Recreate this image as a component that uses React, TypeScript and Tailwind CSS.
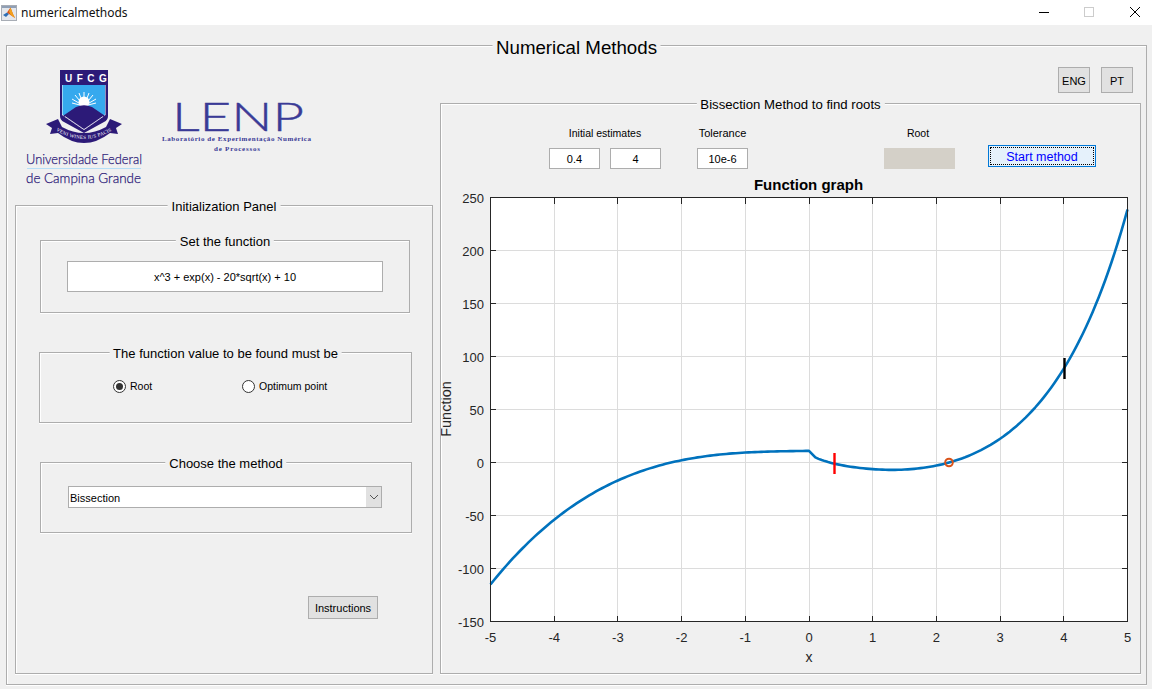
import React from "react";

const etched = "border border-[#adadad] shadow-[inset_1px_1px_0_#ffffff,0_1px_0_#ffffff]";

function Panel({ title, className, titleClass, children }: { title: string; className: string; titleClass?: string; children?: React.ReactNode }) {
  return (
    <div className={`relative ${etched} ${className}`}>
      <span className={`absolute left-1/2 -translate-x-1/2 whitespace-nowrap bg-[#f0f0f0] px-[4px] text-black ${titleClass ?? "top-[-7px] text-[13px] leading-[16px]"}`}>{title}</span>
      {children}
    </div>
  );
}

function GrayButton({ label, className }: { label: string; className: string }) {
  return (
    <div className={`flex items-center justify-center border border-[#adadad] bg-[#e1e1e1] pt-[2px] text-[11px] text-black ${className}`}>{label}</div>
  );
}

function Field({ value, className }: { value: string; className: string }) {
  return (
    <div className={`flex items-center justify-center border border-[#adadad] bg-white pt-[1px] text-[11px] text-black ${className}`}>{value}</div>
  );
}

function Radio({ checked, label, className }: { checked?: boolean; label: string; className?: string }) {
  return (
    <div className={`flex items-center gap-[4px] ${className ?? ""}`}>
      <span className="flex h-[13px] w-[13px] items-center justify-center rounded-full border border-[#333333] bg-white">
        {checked && <span className="h-[7px] w-[7px] rounded-full bg-[#333333]" />}
      </span>
      <span className="pt-[1px] text-[10.5px] leading-[13px] text-black">{label}</span>
    </div>
  );
}

function MatlabIcon() {
  return (
    <svg width="16" height="16" viewBox="0 0 16 16" className="ml-[1px]">
      <rect x="0" y="0" width="16" height="16" fill="#e4e7ec" />
      <rect x="0" y="0" width="16" height="3" fill="#8f9fb5" />
      <rect x="0.5" y="0.5" width="15" height="15" fill="none" stroke="#a8adb5" />
      <path d="M2 10 L6 7.5 L8 9 L5 12 Z" fill="#2e6fb5" />
      <path d="M6 7.5 L9.5 2.5 L12 9 L14 13 L11 11 L8 9 Z" fill="#d9541a" />
      <path d="M9.5 2.5 L8 6.5 L9.5 9.5 L11 11 L14 13 L12 9 Z" fill="#f2a21d" />
    </svg>
  );
}

function WindowControls() {
  return (
    <svg width="120" height="25" viewBox="1032 0 120 25" className="shrink-0">
      <line x1="1039" y1="12.5" x2="1049" y2="12.5" stroke="#000000" />
      <rect x="1084.5" y="7.5" width="9" height="9" fill="none" stroke="#cccccc" />
      <path d="M1130 7 L1140 17 M1140 7 L1130 17" stroke="#000000" fill="none" />
    </svg>
  );
}

function UfcgLogo() {
  return (
    <svg width="130" height="130" viewBox="20 62 130 130" className="ml-[5px] mt-[16px] shrink-0 overflow-visible">
      <path d="M60 70 H108 V116 Q108 120 104 122 L84 133 L64 122 Q60 120 60 116 Z" fill="#2c1a78" />
      <path d="M62 85 H105.5 V115 L84 130 L62 115 Z" fill="#ffffff" />
      <path d="M62.5 85 H105 V114.500 L84 129 L62.500 114.500 Z" fill="#36a9ee" />
      <g stroke="#ffffff" strokeWidth="1">
        <path d="M84 106 L84 92 M84 106 L79 93 M84 106 L89 93 M84 106 L75 95 M84 106 L93 95 M84 106 L72 99 M84 106 L96 99 M84 106 L72 103 M84 106 L96 103" />
      </g>
      <circle cx="84" cy="102" r="5.500" fill="#ffffff" />
      <path d="M63.500 115.500 L76 107 Q84 103.500 92 107 L104.500 115.500 V116 L84 130 L63.500 116 Z" fill="#2c1a78" />
      <path d="M65 116.500 L84 129.500 L103 116.500" fill="none" stroke="#ffffff" strokeWidth="0.8" />
      <path d="M46 124 L58 119 L62 127 Q84 139 106 127 L110 119 L122 124 L116 128 L118 134 L110 133 Q84 153 58 133 L50 134 L52 128 Z" fill="#2c1a78" />
      <path id="ribbon" d="M55 130 Q84 148 113 130" fill="none" />
      <text fontFamily="Liberation Serif, serif" fontSize="5" fill="#ffffff" letterSpacing="0.3">
        <textPath href="#ribbon" startOffset="50%" textAnchor="middle">VENI WINES IUS PACIS</textPath>
      </text>
      <text x="65" y="81.500" fontFamily="Liberation Sans, sans-serif" fontWeight="700" fontSize="10" fill="#ffffff" letterSpacing="4.500">UFCG</text>
      <text x="26" y="164" fontFamily="Lato, sans-serif" fontWeight="300" fontSize="14" fill="#2c1a78" stroke="#2c1a78" strokeWidth="0.25" textLength="116" lengthAdjust="spacingAndGlyphs">Universidade Federal</text>
      <line x1="27" y1="168.500" x2="141" y2="168.500" stroke="#b6def7" />
      <text x="26" y="183" fontFamily="Lato, sans-serif" fontWeight="300" fontSize="14" fill="#2c1a78" stroke="#2c1a78" strokeWidth="0.25" textLength="115" lengthAdjust="spacingAndGlyphs">de Campina Grande</text>
    </svg>
  );
}

function LenpLogo() {
  return (
    <svg width="165" height="60" viewBox="155 95 165 60" className="ml-[5px] mt-[49px] shrink-0 overflow-visible">
      <text x="172" y="131" fontFamily="Lato, sans-serif" fontWeight="300" fontSize="40" fill="#3a3a96" stroke="#3a3a96" strokeWidth="0.4" textLength="132" lengthAdjust="spacingAndGlyphs">LENP</text>
      <text x="162" y="141" fontFamily="Liberation Serif, serif" fontWeight="700" fontSize="7" fill="#3a3a96" textLength="149" lengthAdjust="spacing">Laboratório de Experimentação Numérica</text>
      <text x="237" y="150.500" fontFamily="Liberation Serif, serif" fontWeight="700" fontSize="7" fill="#3a3a96" textAnchor="middle" textLength="46" lengthAdjust="spacing">de Processos</text>
    </svg>
  );
}

const X0 = 490;
const X1 = 1127.5;
const Y0 = 197.5;
const Y1 = 621.5;
const px = (x: number) => 490.5 + (x + 5) * 63.7;
const py = (y: number) => Y0 + (250 - y) * 1.06;
const f = (x: number) => (x < 0 ? x * x * x + Math.exp(x) + 10 : x * x * x + Math.exp(x) - 20 * Math.sqrt(x) + 10);

function buildCurve() {
  const pts: string[] = [];
  for (let i = -100; i <= 100; i++) {
    const x = i / 20;
    if (x > 0 && x < 0.1) continue;
    pts.push(`${px(x).toFixed(2)},${py(f(x)).toFixed(2)}`);
  }
  return pts.join(" ");
}

function Chart() {
  const xs = [-5, -4, -3, -2, -1, 0, 1, 2, 3, 4, 5];
  const ys = [250, 200, 150, 100, 50, 0, -50, -100, -150];
  const xpos = (x: number) => Math.floor(px(x)) + 0.5;
  const ypos = (y: number) => Math.floor(py(y)) + 0.5;
  return (
    <svg width="699" height="504" viewBox="441 169 699 504" className="block" fontFamily="Liberation Sans, sans-serif">
      <rect x={X0} y={Y0} width={X1 - X0} height={Y1 - Y0} fill="#ffffff" />
      <g stroke="#dcdcdc" shapeRendering="crispEdges">
        {xs.slice(1, -1).map((x) => <line key={x} x1={xpos(x)} x2={xpos(x)} y1={Y0} y2={Y1} />)}
        {ys.slice(1, -1).map((y) => <line key={y} x1={X0} x2={X1} y1={ypos(y)} y2={ypos(y)} />)}
      </g>
      <polyline points={buildCurve()} fill="none" stroke="#0072bd" strokeWidth="2.6" strokeLinejoin="round" />
      <line x1="834.500" x2="834.500" y1="453" y2="474" stroke="#ff0000" strokeWidth="2.4" />
      <line x1="1064.500" x2="1064.500" y1="358" y2="379" stroke="#000000" strokeWidth="2.4" />
      <circle cx="949" cy="462.500" r="3.800" fill="none" stroke="#d95319" strokeWidth="2" />
      <rect x={X0 + 0.5} y={Y0} width={X1 - X0 - 0.5} height={Y1 - Y0} fill="none" stroke="#262626" shapeRendering="crispEdges" />
      <g stroke="#262626" shapeRendering="crispEdges">
        {xs.slice(1, -1).map((x) => (
          <g key={x}>
            <line x1={xpos(x)} x2={xpos(x)} y1={Y0} y2={Y0 + 6} />
            <line x1={xpos(x)} x2={xpos(x)} y1={Y1} y2={Y1 - 6} />
          </g>
        ))}
        {ys.slice(1, -1).map((y) => (
          <g key={y}>
            <line x1={X0} x2={X0 + 6} y1={ypos(y)} y2={ypos(y)} />
            <line x1={X1} x2={X1 - 6} y1={ypos(y)} y2={ypos(y)} />
          </g>
        ))}
      </g>
      <g fontSize="13" fill="#262626">
        {xs.map((x) => <text key={x} x={px(x)} y="642" textAnchor="middle">{x}</text>)}
        {ys.map((y) => <text key={y} x="484" y={py(y) + 5} textAnchor="end">{y}</text>)}
        <text x="809" y="662" fontSize="14" textAnchor="middle">x</text>
        <text transform="translate(451 409) rotate(-90)" fontSize="14.500" textAnchor="middle">Function</text>
      </g>
      <text x="808.500" y="190" fontSize="15" fontWeight="700" fill="#000000" textAnchor="middle">Function graph</text>
    </svg>
  );
}

export default function App() {
  return (
    <div className="flex h-[689px] w-[1152px] flex-col overflow-hidden bg-[#f0f0f0] font-['Liberation_Sans',Arial,sans-serif]">
      <div className="flex h-[25px] shrink-0 items-center bg-white">
        <MatlabIcon />
        <span className="ml-[4px] font-['Noto_Sans',sans-serif] text-[12px] text-[#111111]">numericalmethods</span>
        <div className="flex-1" />
        <WindowControls />
      </div>

      <Panel
        title="Numerical Methods"
        className="ml-[6px] mt-[20px] flex h-[640px] w-[1141px] gap-[7px] pl-[8px]"
        titleClass="top-[-9px] text-[18.7px] leading-[22px]"
      >
        <div className="flex w-[418px] shrink-0 flex-col">
          <div className="flex h-[159px] shrink-0 items-start">
            <UfcgLogo />
            <LenpLogo />
          </div>
          <Panel title="Initialization Panel" className="flex h-[469px] w-[418px] flex-col">
            <Panel title="Set the function" className="ml-[24px] mt-[34px] h-[73px] w-[370px] shrink-0 pl-[26px] pt-[20px]">
              <Field value="x^3 + exp(x) - 20*sqrt(x) + 10" className="h-[31px] w-[316px]" />
            </Panel>
            <Panel title="The function value to be found must be" className="ml-[23px] mt-[39px] h-[71px] w-[373px] shrink-0 pl-[73px] pt-[26px]">
              <div className="flex">
                <Radio checked label="Root" className="w-[129px]" />
                <Radio label="Optimum point" />
              </div>
            </Panel>
            <Panel title="Choose the method" className="ml-[24px] mt-[39px] h-[71px] w-[372px] shrink-0 pl-[27px] pt-[23px]">
              <div className="flex h-[22px] w-[314px] items-stretch border border-[#adadad] bg-white">
                <span className="flex flex-1 items-center pl-[1px] pt-[2px] text-[11px] text-black">Bissection</span>
                <span className="flex w-[15px] items-center justify-center bg-[#e1e1e1]">
                  <svg width="10" height="6" viewBox="0 0 10 6"><path d="M1 1 L5 5 L9 1" fill="none" stroke="#555555" /></svg>
                </span>
              </div>
            </Panel>
            <GrayButton label="Instructions" className="ml-[292px] mt-[63px] h-[23px] w-[70px]" />
          </Panel>
        </div>

        <div className="flex w-[701px] shrink-0 flex-col">
          <div className="mr-[8px] mt-[21px] flex justify-end gap-[11px]">
            <GrayButton label="ENG" className="h-[26px] w-[32px]" />
            <GrayButton label="PT" className="h-[26px] w-[32px]" />
          </div>
          <Panel title="Bissection Method to find roots" titleClass="top-[-7px] text-[13.2px] leading-[16px]" className="mt-[10px] flex h-[571px] w-[701px] flex-col">
            <div className="mt-[23px] flex h-[42px] shrink-0 pl-[108px]">
              <div className="flex w-[112px] flex-col">
                <span className="text-center text-[10.5px] leading-[12px] text-black">Initial estimates</span>
                <div className="mt-[9px] flex gap-[10px]">
                  <Field value="0.4" className="h-[21px] w-[51px]" />
                  <Field value="4" className="h-[21px] w-[51px]" />
                </div>
              </div>
              <div className="ml-[36px] flex w-[51px] flex-col">
                <span className="text-center text-[11px] leading-[12px] text-black">Tolerance</span>
                <Field value="10e-6" className="mt-[9px] h-[21px] w-[51px]" />
              </div>
              <div className="ml-[136px] flex w-[71px] flex-col">
                <span className="pr-[3px] text-center text-[10.5px] leading-[12px] text-black">Root</span>
                <div className="mt-[9px] h-[21px] w-[71px] bg-[#d4d0c8]" />
              </div>
              <div className="ml-[33px] mt-[18px] h-[22px] w-[108px] border border-[#0078d7] bg-[#e5f1fb] p-px">
                <div className="flex h-full w-full items-center justify-center border border-dotted border-black pt-[2px] text-[12.5px] text-[#0000ff]">Start method</div>
              </div>
            </div>
            <Chart />
          </Panel>
        </div>
      </Panel>
    </div>
  );
}
